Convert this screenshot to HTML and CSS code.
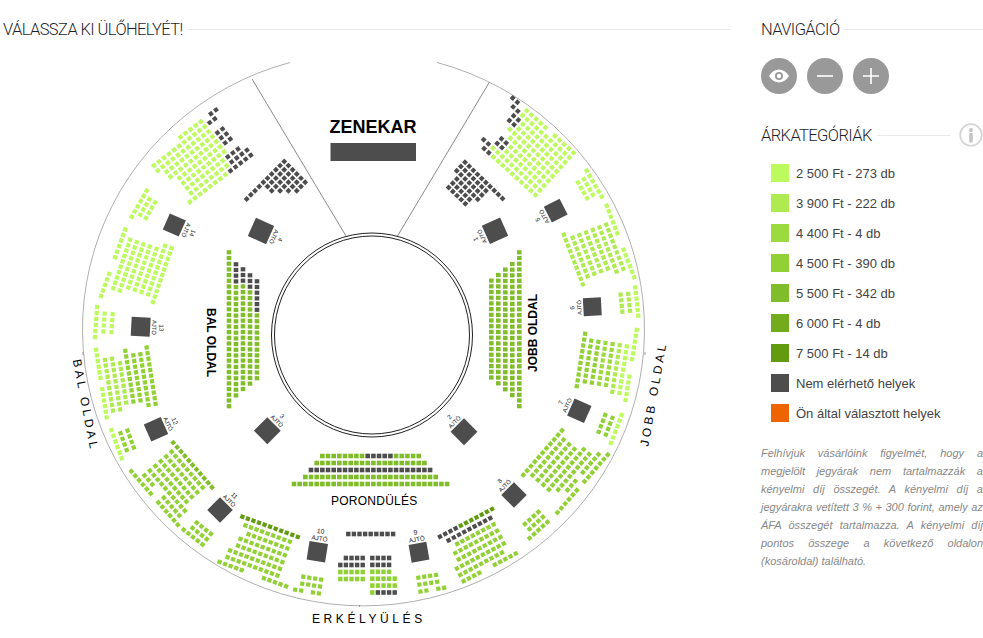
FILE: index.html

```html
<!DOCTYPE html>
<html lang="hu">
<head>
  <meta charset="UTF-8" />
  <meta name="viewport" content="width=device-width, initial-scale=1.0" />
  <title>Válassza ki ülőhelyét!</title>
  <link rel="stylesheet" href="styles.css">
</head>
<body>

  <main id="map-col">
    <div class="title-row">
      <h2>VÁLASSZA KI ÜLŐHELYÉT!</h2>
      <span class="rule"></span>
    </div>
    <svg id="map" viewBox="0 40 731 598" width="731" height="598">
      <path class="outer" d="M290 62.5A281 276.5 0 1 0 437 62.5" />
      <path class="tick" d="M83 352v3M645 352v3M359.500 605v2" />
      <path class="divider" d="M252 79L346 236M489.500 82L397.500 236" />
      <ellipse class="ring" cx="372" cy="335" rx="100.500" ry="102" />
      <ellipse class="ring" cx="372" cy="335" rx="97.500" ry="99" />
      <text class="t-zenekar" x="329.500" y="133">ZENEKAR</text>
      <rect class="stage" x="330.500" y="143" width="85.500" height="18" />
      <text class="t-inner" transform="translate(207 308) rotate(90)">BAL OLDAL</text>
      <text class="t-inner" transform="translate(537 372) rotate(-90)">JOBB OLDAL</text>
      <text class="t-porond" x="331" y="505">PORONDÜLÉS</text>
      <text class="t-outer t-erkely" x="312" y="622.500">ERKÉLYÜLÉS</text>
      <text class="t-outer" transform="translate(72.700 360) rotate(79)">BAL OLDAL</text>
      <text class="t-outer" transform="translate(648.300 446.700) rotate(-80)">JOBB OLDAL</text>
      <g id="seats"></g>
      <g id="doors"></g>
    </svg>
  </main>

  <aside id="side">
    <div class="title-row">
      <h2>NAVIGÁCIÓ</h2>
      <span class="rule"></span>
    </div>
    <div class="nav-btns">
      <button class="round-btn" aria-label="Nézet">
        <svg width="22" height="16" viewBox="0 0 22 16"><path d="M1 8C4 3.500 7.500 1.500 11 1.500S18 3.500 21 8C18 12.500 14.500 14.500 11 14.500S4 12.500 1 8Z" fill="#fff"/><circle cx="11" cy="8" r="4" fill="#999"/><circle cx="11" cy="8" r="2.200" fill="#fff"/></svg>
      </button>
      <button class="round-btn" aria-label="Kicsinyítés">
        <svg width="18" height="18" viewBox="0 0 18 18"><path d="M1 9H17" stroke="#fff" stroke-width="1.600"/></svg>
      </button>
      <button class="round-btn" aria-label="Nagyítás">
        <svg width="18" height="18" viewBox="0 0 18 18"><path d="M1 9H17M9 1V17" stroke="#fff" stroke-width="1.600"/></svg>
      </button>
    </div>

    <div class="title-row cat-title">
      <h2>ÁRKATEGÓRIÁK</h2>
      <span class="rule"></span>
      <svg class="info" width="24" height="24" viewBox="0 0 24 24"><circle cx="12" cy="12" r="10.800" fill="#fff" stroke="#d6d6d6" stroke-width="1.800"/><circle cx="12" cy="7" r="2" fill="#c4c4c4"/><rect x="10.200" y="10" width="3.600" height="9.500" rx="1" fill="#c4c4c4"/></svg>
    </div>
    <ul class="legend">
      <li><span class="swatch c-a"></span>2 500 Ft - 273 db</li>
      <li><span class="swatch c-b"></span>3 900 Ft - 222 db</li>
      <li><span class="swatch c-c"></span>4 400 Ft - 4 db</li>
      <li><span class="swatch c-d"></span>4 500 Ft - 390 db</li>
      <li><span class="swatch c-e"></span>5 500 Ft - 342 db</li>
      <li><span class="swatch c-f"></span>6 000 Ft - 4 db</li>
      <li><span class="swatch c-g"></span>7 500 Ft - 14 db</li>
      <li><span class="swatch c-x"></span>Nem elérhető helyek</li>
      <li><span class="swatch c-o"></span>Ön által választott helyek</li>
    </ul>
    <p class="note">Felhívjuk vásárlóink figyelmét, hogy a megjelölt jegyárak nem tartalmazzák a kényelmi díj összegét. A kényelmi díj a jegyárakra vetített 3 % + 300 forint, amely az ÁFA összegét tartalmazza. A kényelmi díj pontos összege a következő oldalon (kosároldal) található.</p>
  </aside>

  <script src="seats.js"></script>
</body>
</html>
```

FILE: styles.css

```css
* { box-sizing: border-box; margin: 0; padding: 0; }
html, body { height: 100%; overflow: hidden; }
body {
  display: flex;
  background: #fff;
  font-family: "Liberation Sans", Arial, sans-serif;
  color: #444;
}
#map-col {
  width: 731px;
  flex: none;
}
#side {
  width: 222px;
  margin-left: 30px;
  flex: none;
}
.title-row {
  display: flex;
  align-items: center;
  gap: 5px;
  height: 22px;
  margin-top: 18px;
}
#map-col .title-row { padding-left: 3px; }
h2 {
  font-family: Roboto, "Liberation Sans", sans-serif;
  font-size: 16.5px;
  font-weight: 300;
  letter-spacing: -0.6px;
  color: #1f1f2e;
  white-space: nowrap;
}
.rule {
  flex: 1;
  height: 1px;
  background: #eaeaea;
}
#map { display: block; }
.outer { fill: none; stroke: #b0b0b0; stroke-width: 1; }
.tick { fill: none; stroke: #999; stroke-width: 1; }
.divider { fill: none; stroke: #8a8a8a; stroke-width: 1; }
.ring { fill: none; stroke: #222; stroke-width: 1; }
.stage { fill: #4d4d4d; }
text { font-family: "Liberation Sans", Arial, sans-serif; fill: #000; }
.t-zenekar { font-size: 18px; font-weight: bold; }
.t-inner { font-size: 12px; font-weight: bold; }
.t-porond { font-size: 12px; letter-spacing: 0.25px; }
.t-outer { font-size: 12px; letter-spacing: 3.2px; }
.t-erkely { letter-spacing: 3.6px; }
.t-door { fill: #222; text-anchor: middle; }

.nav-btns {
  display: flex;
  gap: 10px;
  margin-top: 18px;
}
.round-btn {
  width: 36px;
  height: 36px;
  border: none;
  border-radius: 50%;
  background: #999;
  display: flex;
  align-items: center;
  justify-content: center;
}
.cat-title { margin-top: 30px; }
.info { flex: none; margin-left: 3px; margin-right: 0; }
.legend {
  list-style: none;
  margin-top: 18px;
  padding-left: 10px;
}
.legend li {
  display: flex;
  align-items: center;
  gap: 7px;
  height: 18px;
  margin-bottom: 12px;
  font-size: 13px;
  color: #444;
  white-space: nowrap;
}
.swatch { width: 18px; height: 18px; flex: none; }
.c-a { background: #bcfa5e; }
.c-b { background: #aeea50; }
.c-c { background: #9dda40; }
.c-d { background: #92d135; }
.c-e { background: #81bd2b; }
.c-f { background: #72ac1c; }
.c-g { background: #629b0f; }
.c-x { background: #4d4d4d; }
.c-o { background: #ee6400; }
.note {
  margin-top: 22px;
  font-size: 11px;
  font-style: italic;
  line-height: 18px;
  color: #888;
  text-align: justify;
}
```

FILE: seats.js

```js
const NS = 'http://www.w3.org/2000/svg';
const COLORS = {
  a: '#bcfa5e', b: '#aeea50', c: '#9dda40', d: '#92d135',
  e: '#81bd2b', f: '#72ac1c', g: '#629b0f', x: '#4d4d4d'
};
const seats = document.getElementById('seats');
const doors = document.getElementById('doors');

function el(name, attrs, parent) {
  const n = document.createElementNS(NS, name);
  for (const k in attrs) n.setAttribute(k, attrs[k]);
  parent.appendChild(n);
  return n;
}

// x,y = centre of first cell of the first row, a = row angle in degrees
function block(x, y, a, px, py, rows, w, h) {
  w = w || 4.2;
  h = h || 4.2;
  const r = a * Math.PI / 180;
  const ux = Math.cos(r), uy = Math.sin(r);
  rows.forEach((row, j) => {
    [...row].forEach((c, i) => {
      if (!COLORS[c]) return;
      const cx = x + i * px * ux - j * py * uy;
      const cy = y + i * px * uy + j * py * ux;
      el('rect', {
        x: (-w / 2).toFixed(2), y: (-h / 2).toFixed(2), width: w, height: h, fill: COLORS[c],
        transform: 'translate(' + cx.toFixed(2) + ' ' + cy.toFixed(2) + ') rotate(' + a + ')'
      }, seats);
    });
  });
}

// the two straight stands beside the ring, one entry per column
function stand(cols) {
  cols.forEach(col => {
    for (let n = 0; n < col.n; n++) {
      el('rect', {
        x: col.x - 2.3, y: (col.y + n * 5.7 - 2.1).toFixed(2), width: 4.6, height: 4.2,
        fill: n < (col.gray || 0) ? COLORS.x : COLORS.e
      }, seats);
    }
  });
}

function door(cx, cy, rot, size, label, font) {
  font = font || 5.8;
  const g = el('g', { transform: 'translate(' + cx + ' ' + cy + ') rotate(' + rot + ')' }, doors);
  el('rect', { x: -size / 2, y: -size / 2, width: size, height: size, fill: COLORS.x }, g);
  const t1 = el('text', { class: 't-door', x: 0, y: -size / 2 - 2, 'font-size': font }, g);
  t1.textContent = 'AJTÓ';
  const t2 = el('text', { class: 't-door', x: 0, y: -size / 2 - 9, 'font-size': font + 0.5 }, g);
  t2.textContent = label;
}

// top left, big block
block(150, 160.5, -37.5, 6.4, 6.35, [
  '......aaaaa.xx',
  'aaaaaaaaaaaxx.',
  'aaaaaaaaaaa...',
  '.aaaaaaaaaaxx.',
  '.aaaaaaaaaaxx.',
  '..aaaaaaaaaxx.',
  '..aaaaaaaaa...',
  '..aaaaaaaaxxx.',
  '..aaaaaaaaxxxx',
  '.aaaaaaaaxxxxx'
]);
block(246.7, 199, -45, 5.9, 5.9, [
  'xxxxxxxxxx',
  '....xxxxxx',
  '....xxxxxx',
  '.....xxxxx',
  '......xxxx',
  '.......xxx'
]);
block(131.7, 216.7, -60, 6, 6.5, ['aaaaaa', '.aaaa', '.aaaa']);
block(101, 296, -70, 5.9, 9, ['aaaaa..aaaaaa']);

// left side, upper
block(113.3, 288.3, -71, 5.7, 7, [
  'aaaaaaaaaa',
  'aaaaaaaaaa',
  '.aaaaaaaaa',
  '.aaaaaaaaa',
  '.aaaaaaaaa',
  '.aaaaaaaaaa',
  'aaaaaaaaaaa'
]);
block(95, 337, -86, 6, 8, ['aaaaaa', '.aaaa', '.aaaa']);

// left side, lower
block(106.7, 417.3, -99, 5.7, 7.2, [
  'aaaaaa.aaaaaa',
  '.bbbbbbbbbb',
  '.bbbbbbbbbb',
  '..bbbbbbbb',
  '..dddddddddd',
  '..ddddddddd',
  '.dddddddddd',
  '.ddddddddddd'
]);
block(121.7, 458.3, -110, 6, 7.5, ['aaaaaa', '.dddd', '.dddd']);
block(169.4, 438.2, 49, 5.9, 7.2, [
  '.eeeeeeeeeee',
  '..ddddddddd',
  '..ddddddddd',
  '..ddddddddd',
  '..ddddddddd',
  '..dddddddddd',
  '..ddd..ddddd',
  'dddddd.dddddd'
]);
block(192, 519, 38, 6, 6.8, ['.dddd', '.dddd', 'ddddd']);

// bottom left
block(236.8, 514.7, 20, 5.9, 7.2, [
  '.ggggggggggg',
  '..ddddddddd',
  '...dddddddd',
  '..ddddddddd',
  '..ddddddddd',
  '.dddddddddd',
  '.dddddddddd',
  'ddddd...ddddd'
]);
block(297.4, 575.8, 9, 6, 7, ['.dddd', '.dddd', 'dd.dd']);

// centre bottom
block(348.3, 534, 0, 5.6, 7, ['xxxxxxxxx'], 4.4, 4.6);
block(340.3, 558, 0, 5.6, 7, ['.xxxx', 'xxxxx', 'ddddd', 'ddddd'], 4.4, 4.6);
block(372.3, 558, 0, 5.6, 6.9, ['xxxx', 'xxxx', 'dddd', 'ddddd', 'ddddd', 'dxxxx'], 4.4, 4.6);

// porond
block(294, 456, 0, 5.67, 7, [
  '.....eeeeeeeexxxxxeeeee',
  '....eeeeeeeeeeeeeeeeeeee',
  '...xxxxxxxxxxxxxxxxxxxxxx',
  '..eeeeeeeeeeeeeeeeeeeeeeee',
  'eeeeeeeeeeeeeeeeeeeeeeeeeeee'
], 4.6, 4.6);

// bottom right
block(440, 536.7, -28, 5.9, 7.2, [
  'xxxxggggggg',
  '.xxxxxxxxx',
  '..dddddddd',
  '.ddddddddd',
  '.ddddddddd',
  'dddddddddd',
  'ddddddddd',
  'dddd..ddddd'
]);
block(418.3, 577.7, -9, 6, 7, ['dddd', 'dddd', 'dd.dd']);

// right side, lower
block(519.4, 479.5, -49, 5.9, 7.2, [
  '.ddddddddddd',
  '..ddddddddd',
  '..ddddddddd',
  '..ddddddddd',
  '..dddddddddd',
  '...ddddddddd',
  '....ddd.ddddd',
  'dddddd.ddddddd'
]);
block(520.5, 528, -42, 6, 6.8, ['.dddd', '.dddd', 'ddddd']);
block(621.7, 415, 111, 6, 7.7, ['aaaaaa', '.dddd', '.dddd']);
block(636.7, 330, 99, 5.9, 7.2, [
  'aaaaaa..aaaaa',
  '...aaaaaaaaa',
  '...bbbbbbbbb',
  '...cccccccc',
  '...cccccccc',
  '...dddddddd',
  '...dddddddd',
  '..dddddddddd'
]);
block(635.3, 287.3, 84, 5.7, 7.7, ['aaaaaa', '.bbbb', '.bbbb']);

// right side, upper
block(606.7, 205.7, 69, 5.9, 7.2, [
  'aaaaaa..aaaaaa',
  '...bbbbbbbbb',
  '...bbbbbbbbb',
  '...bbbbbbbb',
  '...bbbbbbbb',
  '...bbbbbbbb',
  '...bbbbbbbb',
  '..bbbbbbbbbb'
]);
block(586.7, 170.7, 60, 6, 6.7, ['aaaaaa', '.aaaa', '.aaaa']);

// top right
block(512.7, 98, 42, 6.3, 6.3, [
  'xx.aaaaa.aaaaa',
  '.xxaaaaaaaaaaa',
  '..xxaaaaaaaaaa',
  '..xxaaaaaaaaaa',
  '...aaaaaaaaaaa',
  '....aaaaaaaaaa',
  '...xxaaaaaaaaa',
  '...xxaaaaaaaaa',
  '.xxaaaaaaaaaaa',
  '..xxaaaaaaaaaa'
]);
block(465, 162.3, 44, 5.8, 5.9, [
  'xxxxxxxxxx',
  'xxxxxxx',
  'xxxxxxx',
  '.xxxxxx',
  '.xxxxx',
  '.xxxxx'
]);

stand([
  { x: 229, y: 252.3, n: 28 },
  { x: 236, y: 264.3, n: 24, gray: 4 },
  { x: 243, y: 269.3, n: 22, gray: 3 },
  { x: 250, y: 275.3, n: 20, gray: 3 },
  { x: 257, y: 281.3, n: 18, gray: 6 },
  { x: 491.3, y: 280.6, n: 18 },
  { x: 498.3, y: 275, n: 20 },
  { x: 505.3, y: 269.6, n: 22 },
  { x: 512.3, y: 264, n: 24 },
  { x: 519.3, y: 252.3, n: 28 }
]);

door(495, 230.7, -114, 20, '1');
door(555.7, 210.7, -117, 17.7, '5');
door(592.3, 306.7, -93, 18, '6');
door(579.3, 410.7, -66, 18.5, '7');
door(514, 495, -45, 18, '8');
door(419, 552.3, -10, 18, '9', 6.3);
door(317.3, 551.7, 9, 18.7, '10', 6.3);
door(220, 510, 45, 18, '11');
door(156, 429.3, 66, 18.5, '12');
door(140.7, 326.7, 93, 19, '13');
door(174.3, 225, 114, 17.5, '14');
door(261, 231, 114, 20, '4');
door(267.3, 430.7, 45, 19, '3');
door(464, 431.7, -45, 19, '2');
```
